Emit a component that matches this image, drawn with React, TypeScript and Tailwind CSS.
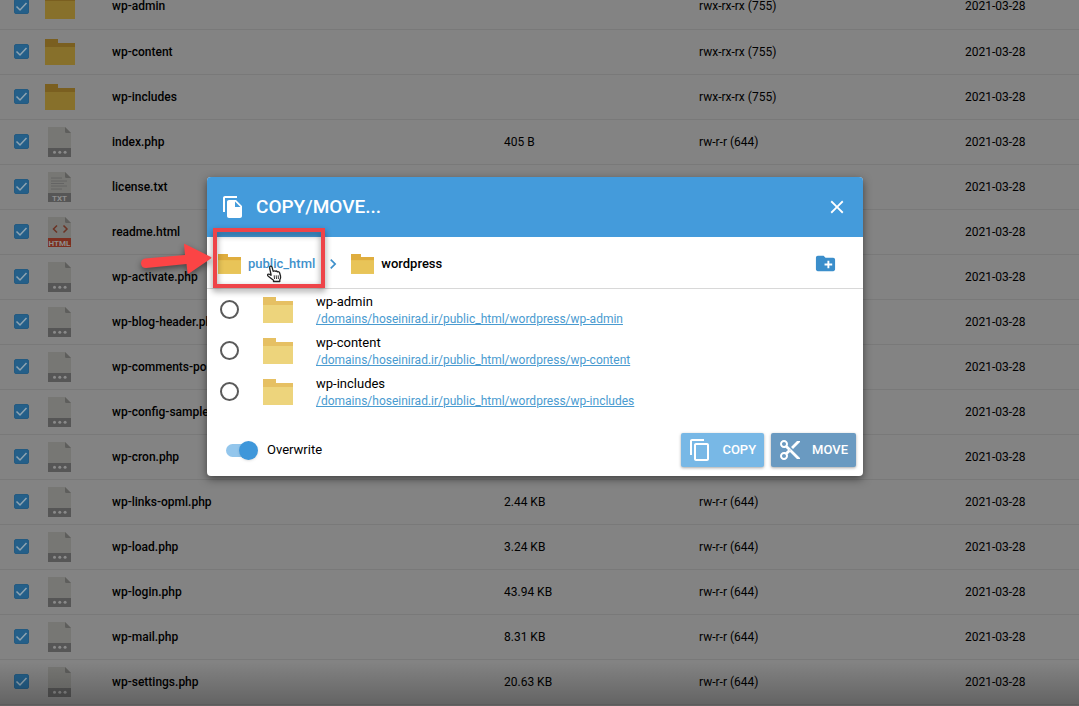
import { useState } from 'react'
import {
  MdChevronRight,
  MdClose,
  MdContentCopy,
  MdContentCut,
  MdCreateNewFolder,
  MdFileCopy,
} from 'react-icons/md'

type Kind = 'folder' | 'file' | 'txt' | 'html'

type Entry = {
  name: string
  kind: Kind
  size?: string
  perms?: string
}

const DATE = '2021-03-28'

const entries: Entry[] = [
  { name: 'wp-admin', kind: 'folder', perms: 'rwx-rx-rx (755)' },
  { name: 'wp-content', kind: 'folder', perms: 'rwx-rx-rx (755)' },
  { name: 'wp-includes', kind: 'folder', perms: 'rwx-rx-rx (755)' },
  { name: 'index.php', kind: 'file', size: '405 B', perms: 'rw-r-r (644)' },
  { name: 'license.txt', kind: 'txt' },
  { name: 'readme.html', kind: 'html' },
  { name: 'wp-activate.php', kind: 'file' },
  { name: 'wp-blog-header.php', kind: 'file' },
  { name: 'wp-comments-post.php', kind: 'file' },
  { name: 'wp-config-sample.php', kind: 'file' },
  { name: 'wp-cron.php', kind: 'file' },
  { name: 'wp-links-opml.php', kind: 'file', size: '2.44 KB', perms: 'rw-r-r (644)' },
  { name: 'wp-load.php', kind: 'file', size: '3.24 KB', perms: 'rw-r-r (644)' },
  { name: 'wp-login.php', kind: 'file', size: '43.94 KB', perms: 'rw-r-r (644)' },
  { name: 'wp-mail.php', kind: 'file', size: '8.31 KB', perms: 'rw-r-r (644)' },
  { name: 'wp-settings.php', kind: 'file', size: '20.63 KB', perms: 'rw-r-r (644)' },
]

const targets = ['wp-admin', 'wp-content', 'wp-includes']
const basePath = '/domains/hoseinirad.ir/public_html/wordpress/'

function Folder({ className, tab, body }: { className: string; tab: string; body: string }) {
  return (
    <svg viewBox="0 0 30 26" className={className} aria-hidden="true">
      <path d="M0 0h13v4h17v6H0z" fill={tab} />
      <path d="M0 8h30v18H0z" fill={body} />
    </svg>
  )
}

function FileIcon({ kind }: { kind: Kind }) {
  const html = kind === 'html'
  return (
    <svg viewBox="0 0 23 30" className="ml-[3px] h-[30px] w-[23px]" aria-hidden="true">
      <path d="M0 0h17l6 6v24H0z" fill="#777774" />
      <path d="M17 0v4.500q0 1.500 1.500 1.500H23z" fill="#5e5e5c" />
      <path d="M0 21h23v9H0z" fill={html ? '#7c2f20' : '#565656'} />
      {kind === 'file' && (
        <g fill="#8a8a8a">
          <circle cx="6.500" cy="25.300" r="1.500" />
          <circle cx="11.800" cy="25.300" r="1.500" />
          <circle cx="17.100" cy="25.300" r="1.500" />
        </g>
      )}
      {kind === 'txt' && (
        <path d="M3 6h11M3 9h16M3 11.500h13M3 14h16M3 17h11" stroke="#5f5f5f" strokeWidth=".8" />
      )}
      {html && (
        <path d="M9 8.500L5.500 12 9 15.500M15.500 8.500L19 12l-3.500 3.500" fill="none" stroke="#6b3324" strokeWidth="1.500" />
      )}
      {kind !== 'file' && (
        <text
          x="11.500"
          y="28.500"
          textAnchor="middle"
          fontSize="8"
          fontWeight="700"
          fill="#8e8e8e"
          fontFamily="Roboto, sans-serif"
        >
          {html ? 'HTML' : 'TXT'}
        </text>
      )}
    </svg>
  )
}

function FileRow({ entry }: { entry: Entry }) {
  const [checked, setChecked] = useState(true)
  return (
    <tr className="h-[45px] border-b border-[#797979]">
      <td className="pl-3.5">
        <label className="grid size-[15px] place-items-center">
          <input
            type="checkbox"
            aria-label={`Select ${entry.name}`}
            checked={checked}
            onChange={(e) => setChecked(e.target.checked)}
            className="peer col-start-1 row-start-1 size-[15px] appearance-none rounded-xs border border-[#245a80] checked:bg-[#245f89]"
          />
          <svg viewBox="0 0 15 15" className="pointer-events-none invisible col-start-1 row-start-1 size-[15px] peer-checked:visible">
            <path d="M2.500 7.500L6 11l6.500-7" fill="none" stroke="#8fa3b0" strokeWidth="1.500" />
          </svg>
        </label>
      </td>
      <td>
        {entry.kind === 'folder' ? (
          <Folder className="h-[26px] w-[30px]" tab="#7a5f20" body="#87702b" />
        ) : (
          <FileIcon kind={entry.kind} />
        )}
      </td>
      <td className="font-medium">{entry.name}</td>
      <td>{entry.size}</td>
      <td>{entry.perms}</td>
      <td>{DATE}</td>
    </tr>
  )
}

// red frame and arrow pointing at the parent folder
function Annotation() {
  return (
    <svg
      viewBox="0 0 200 80"
      className="pointer-events-none absolute top-[43px] -left-[72px] h-[80px] w-[200px] drop-shadow-[0_3px_3px_rgba(0,0,0,0.45)]"
      aria-hidden="true"
    >
      <rect x="80" y="10" width="108" height="56" fill="none" stroke="#ee4449" strokeWidth="4" />
      <path d="M10 38.500l40-3.500-1-10.500q0-1 1-.5l26 13q1 .7 0 1.500L54 53.500q-1.500.6-1.500-1L51.500 44 11 48q-4.500 0-5-4.500 0-4 4-5z" fill="#fb4445" />
    </svg>
  )
}

function HandCursor() {
  return (
    <svg viewBox="0 0 16 18" className="pointer-events-none absolute top-[88px] left-[59px] h-[18px] w-[16px]" aria-hidden="true">
      <path
        d="M5 9.500L3.700 3.300Q3.300 1.500 4.500 1.200 5.800 1 6.200 2.600L7.200 6.300Q8.300 5.400 9.300 6.300 10.500 5.600 11.400 6.800 13 6.300 13.600 7.800L14.500 11Q15 13 13.800 14.800V16.500H7.500V15.300L2.600 11.600Q1 10.200 1.900 9.300 2.900 8.500 5 10.300z"
        fill="#fff"
        stroke="#222"
        strokeWidth="1.300"
        strokeLinejoin="round"
      />
      <path d="M8.200 10.300l.3 3.700M10.200 10.300l.3 3.700M12.200 10.300l.2 3.700" stroke="#222" strokeWidth=".9" />
    </svg>
  )
}

function CopyMoveDialog() {
  const [target, setTarget] = useState('')
  const [overwrite, setOverwrite] = useState(true)

  return (
    <div
      role="dialog"
      aria-labelledby="dialog-title"
      className="relative w-full max-w-[656px] rounded bg-white shadow-[0_3px_8px_rgba(0,0,0,0.5)]"
    >
      <header className="flex h-[60px] items-center rounded-t bg-[#449bdb] px-3.5 text-white">
        <MdFileCopy size={24} />
        <h2 id="dialog-title" className="ml-[11px] flex-1 text-[19px] font-medium">COPY/MOVE...</h2>
        <button type="button" aria-label="Close" className="p-px">
          <MdClose size={22} />
        </button>
      </header>

      <nav className="flex h-[52px] items-center border-b border-[#d8d8d8] pt-0.5 pr-[26px] pl-[11px] text-[13px] font-medium">
        <a href="#public_html" className="flex items-center gap-[7px] text-[#3f91cb]">
          <Folder className="h-5 w-[23px]" tab="#dfad3e" body="#e8c458" />
          public_html
        </a>
        <MdChevronRight size={20} className="mx-2 text-[#3f91cb]" />
        <a href="#wordpress" className="flex items-center gap-[7px]">
          <Folder className="h-5 w-[23px]" tab="#dfad3e" body="#e8c458" />
          wordpress
        </a>
        <button type="button" aria-label="New folder" className="ml-auto text-[#3b8ecb]">
          <MdCreateNewFolder size={23} />
        </button>
      </nav>

      <ul>
        {targets.map((t) => (
          <li key={t} className="flex h-[41px] items-center pl-[13px]">
            <input
              type="radio"
              name="target"
              id={`target-${t}`}
              checked={target === t}
              onChange={() => setTarget(t)}
              className="size-[19px] appearance-none rounded-full border-2 border-[#5a5a5a] checked:border-[6px] checked:border-[#449bdb]"
            />
            <Folder className="ml-6 h-[26px] w-[30px]" tab="#e6c063" body="#edd47c" />
            <div className="ml-[23px]">
              <label htmlFor={`target-${t}`} className="block text-[13px] leading-[18px]">{t}</label>
              <a href={`#${t}`} className="block text-xs leading-4 text-[#4a9bd0] underline">
                {basePath + t}
              </a>
            </div>
          </li>
        ))}
      </ul>

      <footer className="flex items-center gap-[7px] pt-[21px] pr-[7px] pb-[9px] pl-[19px] font-medium text-white">
        <label className="mr-auto flex items-center gap-[9px] text-[13px] font-normal text-black">
          <span className="grid w-8 items-center">
            <input
              type="checkbox"
              role="switch"
              checked={overwrite}
              onChange={(e) => setOverwrite(e.target.checked)}
              className="peer col-start-1 row-start-1 h-[13px] w-[29px] appearance-none rounded-full bg-gray-300 checked:bg-[#93c6ec]"
            />
            <span className="pointer-events-none col-start-1 row-start-1 size-[19px] rounded-full bg-gray-50 shadow-sm peer-checked:ml-[13px] peer-checked:bg-[#3f97da]" />
          </span>
          Overwrite
        </label>
        <button type="button" className="flex h-[34px] items-center gap-2.5 rounded-xs bg-[#78b8e6] pr-2 pl-[7px] text-[13px] shadow-[0_1px_3px_rgba(0,0,0,0.35)]">
          <MdContentCopy size={24} />
          COPY
        </button>
        <button type="button" className="flex h-[34px] items-center gap-2.5 rounded-xs bg-[#6a9ac1] pr-2 pl-[7px] text-[13px] shadow-[0_1px_3px_rgba(0,0,0,0.35)]">
          <MdContentCut size={24} />
          MOVE
        </button>
      </footer>

      <Annotation />
      <HandCursor />
    </div>
  )
}

export default function App() {
  return (
    <div className="relative h-screen overflow-hidden bg-[#838383] font-['Roboto',sans-serif] text-black">
      <table className="-mt-4 w-full table-fixed border-collapse text-left text-xs">
        <colgroup>
          <col className="w-[45px]" />
          <col className="w-[67px]" />
          <col />
          <col className="w-[195px]" />
          <col className="w-[266px]" />
          <col className="w-[114px]" />
        </colgroup>
        <tbody>
          {entries.map((entry) => (
            <FileRow key={entry.name} entry={entry} />
          ))}
        </tbody>
      </table>
      <div className="pointer-events-none absolute inset-x-0 bottom-0 h-11 bg-linear-to-t from-black/25 to-transparent" />
      <div className="absolute inset-0 flex items-start justify-center pt-[177px] pr-[9px]">
        <CopyMoveDialog />
      </div>
    </div>
  )
}
